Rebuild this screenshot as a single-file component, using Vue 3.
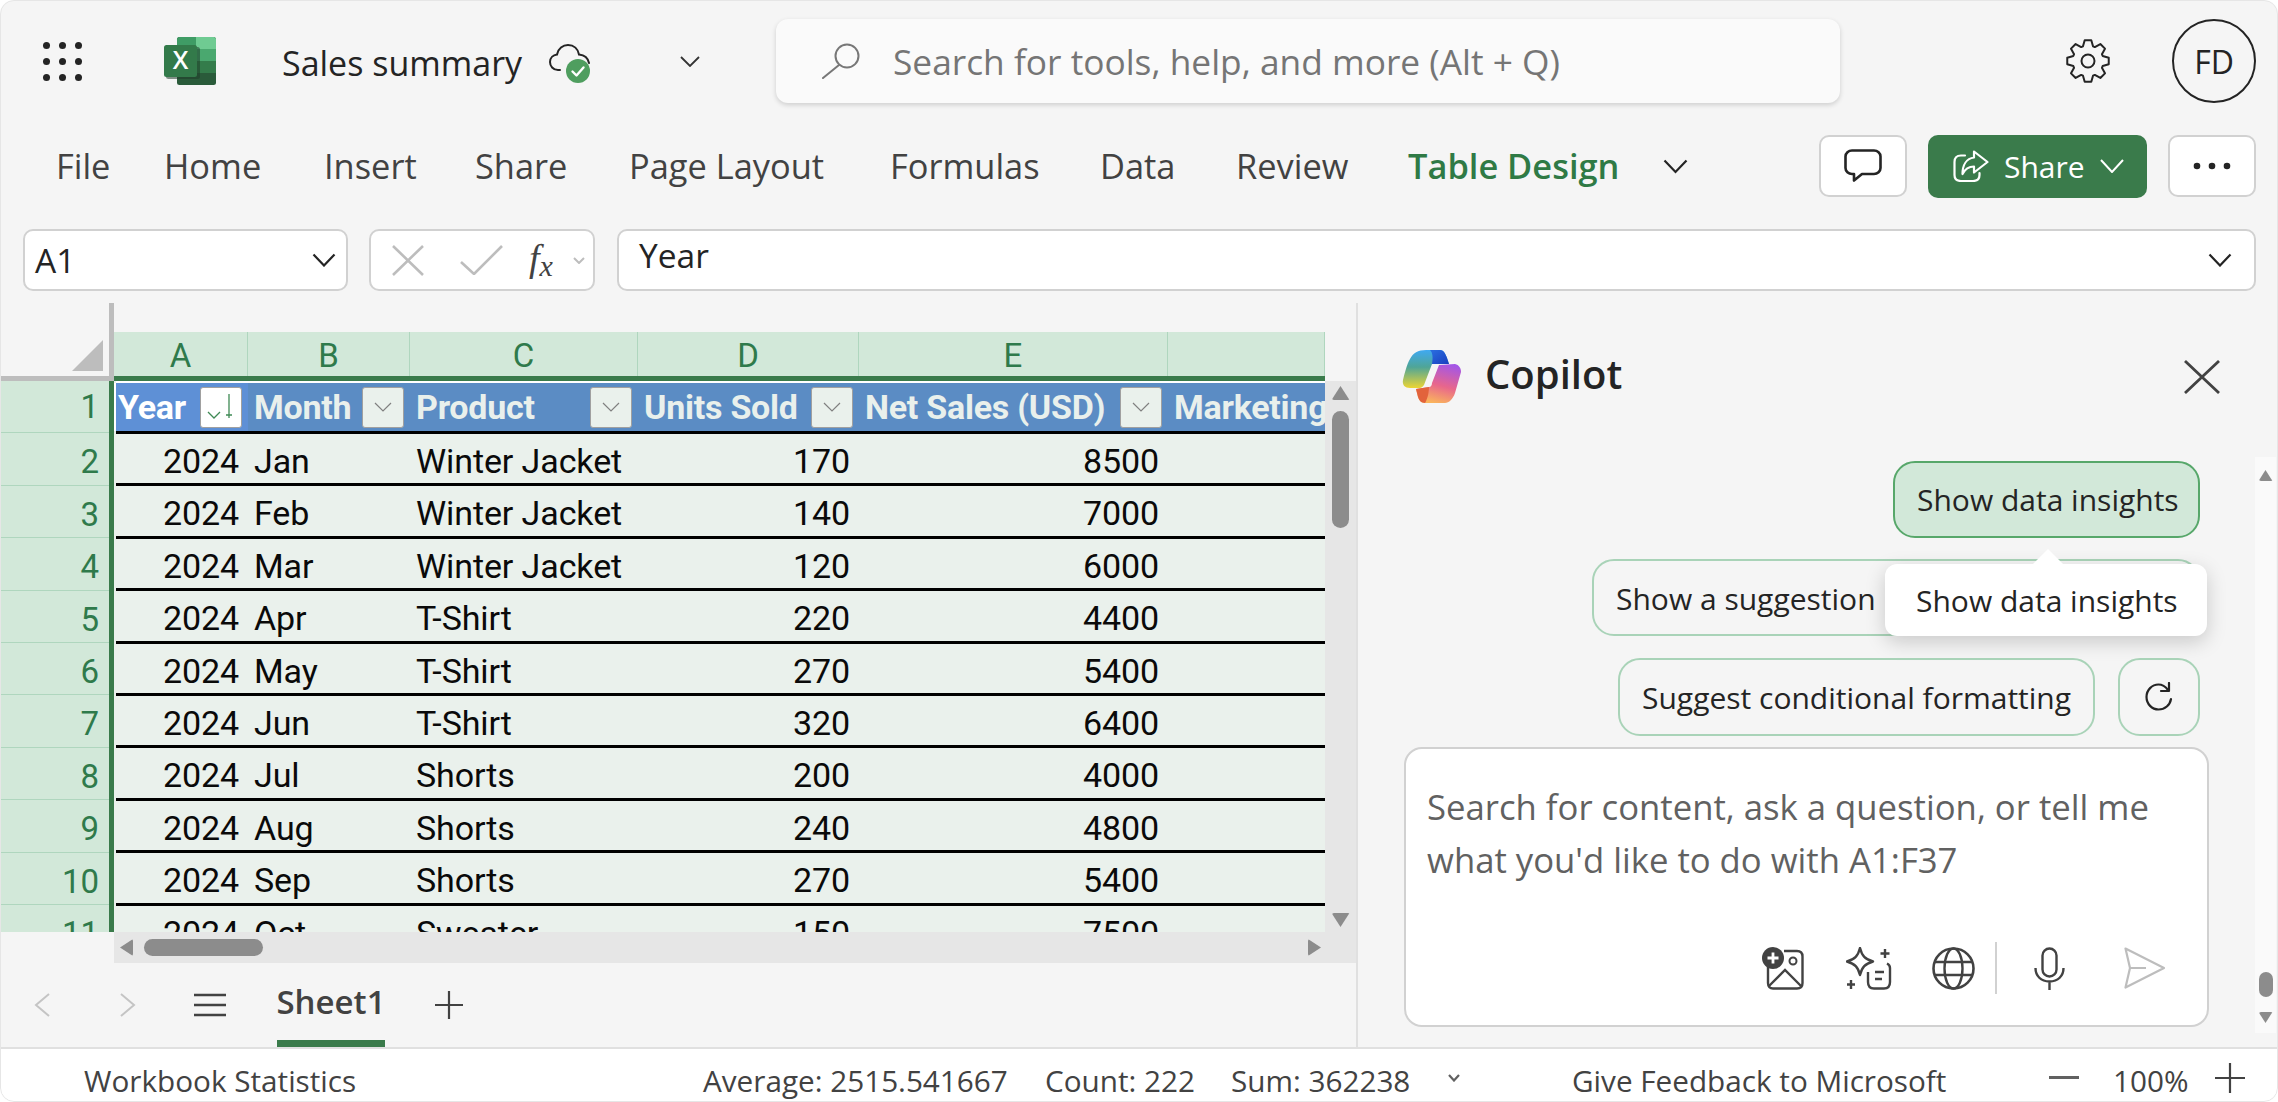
<template>
  <div class="window">
    <header class="titlebar">
      <div class="waffle"><i v-for="n in 9" :key="n"></i></div>
      <svg class="xl-logo" viewBox="0 0 52 48">
        <rect x="13" width="39" height="48" rx="2.5" fill="#2a5b3a" />
        <path d="M15.500 0H32V12H13V2.500A2.500 2.500 0 0 1 15.500 0Z" fill="#3f9c65" />
        <path d="M32 0H49.500A2.500 2.500 0 0 1 52 2.500V12H32Z" fill="#6fcb92" />
        <rect x="13" y="12" width="19" height="12" fill="#3a8a57" />
        <rect x="32" y="12" width="20" height="12" fill="#4aa86f" />
        <rect x="13" y="24" width="39" height="12" fill="#347c4b" />
        <rect y="9" width="34" height="32" rx="2.500" fill="#1f3d29" opacity=".55" transform="translate(2 1)" />
        <rect y="8" width="33" height="32" rx="2.500" fill="#337a4a" />
        <text x="16.500" y="32" text-anchor="middle" class="xl-x">X</text>
      </svg>
      <span class="doc-title">Sales summary</span>
      <svg class="cloud" viewBox="0 0 41 39" fill="none">
        <path d="M11 26H9C4 26 1 22 1 18C1 14 4 11 8 10.500C9 4.500 14 1 19 1C25 1 29 5 30 10.500C35 11 39 14 40 19" stroke="#242424" stroke-width="2" stroke-linecap="round" />
        <circle cx="29" cy="27" r="12" fill="#4f9e5f" />
        <path d="M23.500 27.500L27.500 31.500L34.500 23.500" stroke="#fff" stroke-width="2.400" stroke-linecap="round" stroke-linejoin="round" />
      </svg>
      <svg class="title-chev" viewBox="0 0 20 11" fill="none">
        <path d="M1 1L10 10L19 1" stroke="#333" stroke-width="1.800" />
      </svg>
      <div class="searchbox">
        <svg class="search-icon" viewBox="0 0 38 36" fill="none">
          <circle cx="25" cy="13" r="11.500" stroke="#777" stroke-width="2" />
          <path d="M17 22L1 35" stroke="#777" stroke-width="2" stroke-linecap="round" />
        </svg>
        <span>Search for tools, help, and more (Alt + Q)</span>
      </div>
      <svg class="gear" viewBox="0 0 44 44" fill="none">
        <path :d="gearPath" stroke="#242424" stroke-width="2" stroke-linejoin="round" />
        <circle cx="22" cy="22" r="6.500" stroke="#242424" stroke-width="2" />
      </svg>
      <div class="avatar">FD</div>
    </header>

    <nav class="ribbon">
      <span v-for="tab in tabs" :key="tab.label" class="tab" :class="{ active: tab.active }" :style="{ width: tab.width + 'px' }">{{ tab.label }}</span>
      <svg class="ribbon-chev" viewBox="0 0 25 15" fill="none">
        <path d="M1.500 1.500L12.500 13L23.500 1.500" stroke="#242424" stroke-width="2.200" />
      </svg>
      <div class="ribbon-actions">
        <button class="rb-btn">
          <svg width="38" height="33" viewBox="0 0 38 33" fill="none">
            <path d="M8 1.500H30C33.500 1.500 36.500 4 36.500 7.500V19C36.500 22.500 33.500 25 30 25H18L10 31.500V25H8C4.500 25 1.500 22.500 1.500 19V7.500C1.500 4 4.500 1.500 8 1.500Z" stroke="#242424" stroke-width="2.600" stroke-linejoin="round" />
          </svg>
        </button>
        <button class="share-btn">
          <svg width="36" height="32" viewBox="0 0 36 32" fill="none">
            <path d="M12 5.500H8C4 5.500 1.500 8 1.500 12V25C1.500 29 4 31 8 31H20C24 31 26.500 29 26.500 25V23" stroke="#fff" stroke-width="2.200" stroke-linecap="round" />
            <path d="M21 1.500L34.500 12L21 22.500V16.500C15.500 16.500 12 19 9.500 24C9.500 15 13.500 8.500 21 7.500Z" stroke="#fff" stroke-width="2.200" stroke-linejoin="round" />
          </svg>
          <span>Share</span>
          <svg width="24" height="14" viewBox="0 0 24 14" fill="none">
            <path d="M1 1L12 13L23 1" stroke="#fff" stroke-width="2" />
          </svg>
        </button>
        <button class="rb-btn">
          <svg width="38" height="8" viewBox="0 0 38 8"><circle cx="4" cy="4" r="3.300" fill="#242424" /><circle cx="19" cy="4" r="3.300" fill="#242424" /><circle cx="34" cy="4" r="3.300" fill="#242424" /></svg>
        </button>
      </div>
    </nav>

    <section class="formula-row">
      <div class="field name-box">
        <span>A1</span>
        <svg width="24" height="14" viewBox="0 0 24 14" fill="none"><path d="M1.500 1.500L12 12.500L22.500 1.500" stroke="#242424" stroke-width="2.200" /></svg>
      </div>
      <div class="field fx-box">
        <svg width="32" height="31" viewBox="0 0 32 31" fill="none"><path d="M1 1L31 30M31 1L1 30" stroke="#bdbdbd" stroke-width="2.600" /></svg>
        <svg class="fx-check" width="43" height="30" viewBox="0 0 43 30" fill="none"><path d="M1 17L14 29L42 1" stroke="#bdbdbd" stroke-width="2.600" /></svg>
        <span class="fx-label">f<sub>x</sub></span>
        <svg width="12" height="7" viewBox="0 0 12 7" fill="none"><path d="M1 1L6 6L11 1" stroke="#bdbdbd" stroke-width="2" /></svg>
      </div>
      <div class="field formula-input">
        <span>Year</span>
        <svg width="24" height="14" viewBox="0 0 24 14" fill="none"><path d="M1.500 1.500L12 12.500L22.500 1.500" stroke="#242424" stroke-width="2.200" /></svg>
      </div>
    </section>

    <main class="workspace">
      <div class="sheet">
        <div class="sheet-top">
          <div class="corner"><i></i></div>
          <div class="col-strip">
            <div class="col-heads">
              <span v-for="c in columns" :key="c.name" class="col-head" :style="{ width: c.width + 'px' }">{{ c.letter }}</span>
            </div>
          </div>
        </div>
        <div class="sheet-body">
          <div class="row-heads">
            <div v-for="n in 11" :key="n" class="row-head">{{ n }}</div>
          </div>
          <div class="cells">
            <div class="tbl-row tbl-header">
              <div v-for="(c, i) in columns" :key="c.name" class="th" :class="{ 'th-sorted': i === 0 }" :style="{ width: c.width + 'px' }">
                <span class="th-label">{{ c.name }}</span>
                <button v-if="c.filter" class="filter" :class="{ sorted: i === 0 }">
                  <svg v-if="i === 0" width="30" height="28" viewBox="0 0 30 28" fill="none">
                    <path d="M2 19L8 25L14 19" stroke="#3f8a55" stroke-width="1.300" />
                    <path d="M23 1V25M20 22H26" stroke="#3f8a55" stroke-width="1.300" />
                  </svg>
                  <svg v-else width="18" height="10" viewBox="0 0 18 10" fill="none">
                    <path d="M1 1L9 9L17 1" stroke="#808080" stroke-width="1.200" />
                  </svg>
                </button>
              </div>
            </div>
            <div v-for="row in rows" :key="row.month" class="tbl-row">
              <div class="td num" style="width: 132px">2024</div>
              <div class="td" style="width: 162px">{{ row.month }}</div>
              <div class="td" style="width: 228px">{{ row.product }}</div>
              <div class="td num" style="width: 221px">{{ row.units }}</div>
              <div class="td num" style="width: 309px">{{ row.sales }}</div>
              <div class="td" style="width: 157px"></div>
            </div>
          </div>
          <div class="vscroll">
            <span class="arrow arrow-up"></span>
            <span class="v-thumb"></span>
            <span class="arrow arrow-down"></span>
          </div>
        </div>
        <div class="hscroll-row">
          <div class="hscroll">
            <span class="harrow harrow-left"></span>
            <span class="h-thumb"></span>
            <span class="harrow harrow-right"></span>
          </div>
        </div>
        <div class="sheet-tabs">
          <svg class="nav-prev" width="16" height="24" viewBox="0 0 16 24" fill="none"><path d="M15 1L2 12L15 23" stroke="#c4c4c4" stroke-width="2" /></svg>
          <svg class="nav-next" width="16" height="24" viewBox="0 0 16 24" fill="none"><path d="M1 1L14 12L1 23" stroke="#c4c4c4" stroke-width="2" /></svg>
          <svg class="nav-menu" width="32" height="24" viewBox="0 0 32 24" fill="none"><path d="M0 2H32M0 12H32M0 22H32" stroke="#424242" stroke-width="2.400" /></svg>
          <div class="sheet-name">Sheet1</div>
          <svg class="nav-add" width="28" height="28" viewBox="0 0 28 28" fill="none"><path d="M14 0V28M0 14H28" stroke="#424242" stroke-width="2.200" /></svg>
        </div>
      </div>

      <aside class="copilot">
        <div class="copilot-head">
          <svg class="copilot-logo" viewBox="0 0 59 53">
            <defs>
              <linearGradient id="leftBand" x1="0" y1="0" x2="0" y2="1">
                <stop offset="0" stop-color="#3fa9f2" />
                <stop offset=".45" stop-color="#4fa597" />
                <stop offset="1" stop-color="#ecd534" />
              </linearGradient>
              <linearGradient id="tailBand" x1="0" y1="0" x2="1" y2="1">
                <stop offset="0" stop-color="#2b6fe0" />
                <stop offset="1" stop-color="#1a3fbf" />
              </linearGradient>
              <linearGradient id="rightBand" x1="0.700" y1="0" x2="0.400" y2="1">
                <stop offset="0" stop-color="#a456e6" />
                <stop offset=".55" stop-color="#e8668c" />
                <stop offset="1" stop-color="#fab45c" />
              </linearGradient>
            </defs>
            <path d="M24 0H38C42 0 44 4 47 14H30L22 35C20 38 18 38 16 38H8C3 38 0 35 1 30C3 22 5 14 8 9C11 3 16 0 24 0Z" fill="url(#leftBand)" />
            <path d="M28 0H38C42 0 44 4 47 14H30C31 8 31 3 28 0Z" fill="url(#tailBand)" />
            <path d="M37 15L53 14C57 15 59 18 59 22L53 43C51 49 47 53 43 53H23C19 53 17 50 16 47L14 39L27 37C29 37 30 35 30 33Z" fill="url(#rightBand)" />
            <path d="M14 39L27 37C27 43 25 50 23 53C19 53 17 50 16 47Z" fill="#e2633c" />
          </svg>
          <span class="copilot-title">Copilot</span>
          <svg class="copilot-close" width="36" height="34" viewBox="0 0 36 34" fill="none"><path d="M1 1L35 33M35 1L1 33" stroke="#424242" stroke-width="2.800" /></svg>
        </div>
        <div class="copilot-body">
          <div class="copilot-main">
            <div class="chips">
              <div class="chip chip-active">Show data insights</div>
              <div class="chip chip-long">
                Show a suggestion
                <div class="tooltip">Show data insights</div>
              </div>
              <div class="chip-row">
                <div class="chip">Suggest conditional formatting</div>
                <div class="chip chip-icon">
                  <svg width="30" height="30" viewBox="0 0 30 30" fill="none">
                    <path d="M24 8C21 4 18 2.500 14.500 2.500C8 2.500 2.500 8 2.500 15C2.500 22 8 27.500 14.500 27.500C21 27.500 26 23 27 17" stroke="#242424" stroke-width="2.200" stroke-linecap="round" />
                    <path d="M25 1V9H17" stroke="#242424" stroke-width="2.200" stroke-linecap="round" stroke-linejoin="round" />
                  </svg>
                </div>
              </div>
            </div>
            <div class="prompt">
              <p>Search for content, ask a question, or tell me what you'd like to do with A1:F37</p>
              <div class="prompt-tools">
                <svg class="tool-image" width="42" height="43" viewBox="0 0 42 43" fill="none">
                  <path d="M22 4H35C38.500 4 40.500 6 40.500 9.500V36C40.500 39.500 38.500 41.500 35 41.500H11C8 41.500 6 39.500 6 36V20" stroke="#424242" stroke-width="2.400" />
                  <path d="M7 39L23 23L39 39" stroke="#424242" stroke-width="2.400" />
                  <circle cx="31" cy="14" r="3.500" stroke="#424242" stroke-width="2" />
                  <circle cx="11" cy="11" r="11" fill="#424242" />
                  <path d="M11 5.500V16.500M5.500 11H16.500" stroke="#fff" stroke-width="2.800" />
                </svg>
                <svg class="tool-spark" width="46" height="43" viewBox="0 0 46 43" fill="none">
                  <path d="M14 1C16 9 19 12 27 14.500C19 17 16 20 14 28C12 20 9 17 1 14.500C9 12 12 9 14 1Z" stroke="#424242" stroke-width="2.400" stroke-linejoin="round" />
                  <path d="M22 25V35C22 39 24 41.500 28 41.500H38C42 41.500 44 39 44 35V21C44 19 43 17.500 41 16.500" stroke="#424242" stroke-width="2.400" />
                  <path d="M29 25H38M29 32H36" stroke="#424242" stroke-width="2.600" />
                  <path d="M39 2V11M34.500 6.500H43.500M5 33V42M1 37.500H9" stroke="#424242" stroke-width="2.400" />
                </svg>
                <svg class="tool-globe" width="43" height="43" viewBox="0 0 43 43" fill="none">
                  <circle cx="21.500" cy="21.500" r="20" stroke="#424242" stroke-width="2.600" />
                  <ellipse cx="21.500" cy="21.500" rx="9" ry="20" stroke="#424242" stroke-width="2.400" />
                  <path d="M3 15H40M3 28H40" stroke="#424242" stroke-width="2.400" />
                </svg>
                <i class="tool-sep"></i>
                <svg class="tool-mic" width="31" height="43" viewBox="0 0 31 43" fill="none">
                  <rect x="8.500" y="1.500" width="14" height="28" rx="7" stroke="#424242" stroke-width="2.400" />
                  <path d="M1.500 21C1.500 29 7 34.500 15.500 34.500C24 34.500 29.500 29 29.500 21M15.500 34.500V43" stroke="#424242" stroke-width="2.400" />
                </svg>
                <svg class="tool-send" width="41" height="42" viewBox="0 0 41 42" fill="none">
                  <path d="M1.500 1.500L40 21L1.500 40.500L6 21ZM6 21H22" stroke="#bdbdbd" stroke-width="2.200" stroke-linejoin="round" />
                </svg>
              </div>
            </div>
          </div>
          <div class="pane-scroll">
            <span class="pane-arrow pane-up"></span>
            <span class="pane-thumb"></span>
            <span class="pane-arrow pane-down"></span>
          </div>
        </div>
      </aside>
    </main>

    <footer class="statusbar">
      <span v-for="item in statusItems" :key="item.label" :style="{ width: item.width + 'px' }">{{ item.label }}</span>
      <svg class="st-chev" width="12" height="8" viewBox="0 0 12 8" fill="none"><path d="M1 1L6 6.500L11 1" stroke="#616161" stroke-width="2.200" /></svg>
      <span class="st-feedback">Give Feedback to Microsoft</span>
      <svg class="st-minus" width="30" height="4" viewBox="0 0 30 4"><rect width="30" height="3" fill="#616161" /></svg>
      <span class="st-zoom">100%</span>
      <svg width="30" height="30" viewBox="0 0 30 30" fill="none"><path d="M15 0V30M0 15H30" stroke="#424242" stroke-width="2.200" /></svg>
    </footer>
  </div>
</template>

<script setup>
const tabs = [
  { label: 'File', width: 108 },
  { label: 'Home', width: 160 },
  { label: 'Insert', width: 151 },
  { label: 'Share', width: 154 },
  { label: 'Page Layout', width: 261 },
  { label: 'Formulas', width: 210 },
  { label: 'Data', width: 136 },
  { label: 'Review', width: 172 },
  { label: 'Table Design', width: 254, active: true }
]

const columns = [
  { letter: 'A', name: 'Year', width: 134, filter: true },
  { letter: 'B', name: 'Month', width: 162, filter: true },
  { letter: 'C', name: 'Product', width: 228, filter: true },
  { letter: 'D', name: 'Units Sold', width: 221, filter: true },
  { letter: 'E', name: 'Net Sales (USD)', width: 309, filter: true },
  { letter: '', name: 'Marketing Spend', width: 157, filter: false }
]

const rows = [
  { month: 'Jan', product: 'Winter Jacket', units: 170, sales: 8500 },
  { month: 'Feb', product: 'Winter Jacket', units: 140, sales: 7000 },
  { month: 'Mar', product: 'Winter Jacket', units: 120, sales: 6000 },
  { month: 'Apr', product: 'T-Shirt', units: 220, sales: 4400 },
  { month: 'May', product: 'T-Shirt', units: 270, sales: 5400 },
  { month: 'Jun', product: 'T-Shirt', units: 320, sales: 6400 },
  { month: 'Jul', product: 'Shorts', units: 200, sales: 4000 },
  { month: 'Aug', product: 'Shorts', units: 240, sales: 4800 },
  { month: 'Sep', product: 'Shorts', units: 270, sales: 5400 },
  { month: 'Oct', product: 'Sweater', units: 150, sales: 7500 }
]

const statusItems = [
  { label: 'Workbook Statistics', width: 619 },
  { label: 'Average: 2515.541667', width: 342 },
  { label: 'Count: 222', width: 186 },
  { label: 'Sum: 362238', width: 217 }
]

// gear outline: 8 teeth around the centre of a 44 box
const gearPath = (() => {
  const pts = []
  for (let i = 0; i < 8; i++) {
    const a = (i * Math.PI) / 4 - Math.PI / 2
    const step = Math.PI / 4
    const at = (r, da) => `${(22 + r * Math.cos(a + da)).toFixed(2)} ${(22 + r * Math.sin(a + da)).toFixed(2)}`
    pts.push(at(15.5, -step * 0.42), at(21, -step * 0.2), at(21, step * 0.2), at(15.5, step * 0.42))
  }
  return 'M' + pts.join('L') + 'Z'
})()
</script>

<style scoped>
.window {
  position: relative;
  width: 2278px;
  height: 1102px;
  display: flex;
  flex-direction: column;
  background: #f5f5f5;
  border-radius: 14px;
  overflow: hidden;
  font-family: "Open Sans", "Noto Sans", sans-serif;
  color: #242424;
}

.window::after {
  content: "";
  position: absolute;
  inset: 0;
  border: 1.5px solid #e6e6e6;
  border-radius: 14px;
  pointer-events: none;
}

.titlebar {
  height: 122px;
  display: flex;
  align-items: center;
  padding-left: 43px;
  flex: none;
}

.waffle {
  width: 39px;
  display: grid;
  grid-template-columns: repeat(3, 7px);
  grid-auto-rows: 7px;
  justify-content: space-between;
  row-gap: 9px;
}

.waffle i {
  background: #242424;
  border-radius: 50%;
}

.xl-logo {
  width: 52px;
  height: 48px;
  margin-left: 82px;
}

.xl-x {
  font: 600 25px "Open Sans", sans-serif;
  fill: #fff;
}

.doc-title {
  width: 240px;
  margin-left: 66px;
  font-size: 34px;
  white-space: nowrap;
  padding-top: 4px;
}

.cloud {
  width: 41px;
  height: 39px;
  margin-left: 27px;
  margin-top: 4px;
}

.title-chev {
  width: 20px;
  height: 11px;
  margin-left: 90px;
}

.searchbox {
  width: 1064px;
  height: 84px;
  margin-left: 76px;
  box-sizing: border-box;
  display: flex;
  align-items: center;
  padding-left: 46px;
  background: #fafafa;
  border-radius: 12px;
  box-shadow: 0 2px 5px rgba(0, 0, 0, 0.16);
  color: #757575;
  font-size: 35.300px;
}

.search-icon {
  width: 38px;
  height: 36px;
  margin-right: 33px;
}

.gear {
  width: 44px;
  height: 44px;
  margin-left: 226px;
}

.avatar {
  width: 84px;
  height: 84px;
  margin-left: 62px;
  box-sizing: border-box;
  border: 2px solid #242424;
  border-radius: 50%;
  display: flex;
  align-items: center;
  justify-content: center;
  font-size: 32px;
}

.ribbon {
  height: 88px;
  flex: none;
  display: flex;
  align-items: center;
  padding: 0 22px 0 56px;
}

.tab {
  flex: none;
  font-size: 34.400px;
  color: #424242;
  white-space: nowrap;
  padding-bottom: 2px;
}

.tab.active {
  color: #2f7a45;
  font-weight: 600;
}

.ribbon-chev {
  width: 25px;
  height: 15px;
  margin-left: 1px;
}

.ribbon-actions {
  margin-left: auto;
  display: flex;
  gap: 21px;
}

.rb-btn {
  width: 88px;
  height: 62px;
  background: #fff;
  border: 2px solid #d1d1d1;
  border-radius: 10px;
  display: flex;
  align-items: center;
  justify-content: center;
  padding: 0;
}

.share-btn {
  width: 219px;
  height: 63px;
  background: #3a7b4b;
  border: none;
  border-radius: 10px;
  color: #fff;
  display: flex;
  align-items: center;
  gap: 15px;
  padding: 0 0 0 25px;
  font: 30px "Open Sans", sans-serif;
}

.formula-row {
  height: 62px;
  margin-top: 19px;
  flex: none;
  display: flex;
  padding: 0 22px 0 23px;
  gap: 21px;
}

.field {
  box-sizing: border-box;
  height: 62px;
  background: #fff;
  border: 2px solid #d1d1d1;
  border-radius: 10px;
  display: flex;
  align-items: center;
}

.name-box {
  width: 325px;
  justify-content: space-between;
  padding: 0 10px 0 10px;
  font-size: 33.500px;
}

.fx-box {
  width: 226px;
  padding-left: 21px;
}

.fx-check {
  margin-left: 36px;
}

.fx-label {
  width: 44px;
  margin-left: 26px;
  padding-bottom: 5px;
  font: italic 38px "Liberation Serif", serif;
  color: #424242;
}

.fx-label sub {
  font-size: 30px;
  vertical-align: -5px;
  line-height: 0;
}

.formula-input {
  flex: 1;
  margin-left: 1px;
  justify-content: space-between;
  padding: 0 22px 0 20px;
  font-size: 33.500px;
}

.formula-input span {
  padding-bottom: 10px;
}

.workspace {
  flex: 1;
  margin-top: 12px;
  display: flex;
  min-height: 0;
}

.sheet {
  width: 1356px;
  flex: none;
  display: flex;
  flex-direction: column;
  border-right: 2px solid #e0e0e0;
  box-sizing: content-box;
}

.sheet-top {
  height: 78px;
  display: flex;
  flex: none;
}

.corner {
  width: 114px;
  flex: none;
  box-sizing: border-box;
  border-right: 5px solid #bdbdbd;
  border-bottom: 5px solid #bdbdbd;
  display: flex;
  justify-content: flex-end;
  align-items: flex-end;
  padding: 0 6px 5px 0;
}

.corner i {
  width: 31px;
  height: 31px;
  background: #bdbdbd;
  clip-path: polygon(100% 0, 100% 100%, 0 100%);
}

.col-strip {
  width: 1211px;
  padding-top: 29px;
  box-sizing: border-box;
}

.col-heads {
  height: 49px;
  box-sizing: border-box;
  display: flex;
  background: #d2e8d9;
  border-bottom: 5px solid #3a7b4b;
  overflow: hidden;
}

.col-head {
  flex: none;
  box-sizing: border-box;
  border-right: 1.500px solid #afd6be;
  text-align: center;
  font: 33px/48px Roboto, sans-serif;
  color: #2f7a4b;
}

.sheet-body {
  height: 551px;
  flex: none;
  display: flex;
  overflow: hidden;
}

.row-heads {
  width: 114px;
  flex: none;
  box-sizing: border-box;
  background: #d2e8d9;
  border-right: 5px solid #3a7b4b;
}

.row-head {
  height: 52.400px;
  box-sizing: border-box;
  border-bottom: 1.500px solid #afd6be;
  padding-right: 10px;
  text-align: right;
  font: 33px/57px Roboto, sans-serif;
  color: #2f7a4b;
}

.row-head:first-child {
  line-height: 52px;
}

.cells {
  width: 1211px;
  flex: none;
  background: #eaf1ec;
  overflow: hidden;
  box-sizing: border-box;
  padding-left: 2px;
}

.tbl-row {
  display: flex;
  height: 52.400px;
  box-sizing: border-box;
  border-bottom: 3px solid #000;
  font: 34px Roboto, sans-serif;
  color: #0a0a0a;
}

.tbl-header {
  height: 53px;
  border-top: 2px solid #fff;
}

.th {
  flex: none;
  box-sizing: border-box;
  display: flex;
  align-items: center;
  justify-content: space-between;
  padding: 0 6px 0 6px;
  background: #5b8cc4;
  overflow: hidden;
}

.th-sorted {
  margin-left: -2px;
  border-left: 2px solid #fff;
  background: #5e90d6;
  padding-left: 2px;
}

.th-label {
  font-weight: 700;
  color: #e9f0ec;
  white-space: nowrap;
  letter-spacing: -0.25px;
}

.th-sorted .th-label {
  color: #fff;
}

.filter {
  flex: none;
  width: 42px;
  height: 41px;
  padding: 0;
  box-sizing: border-box;
  background: #eaf1ec;
  border: 1px solid #a0a0a0;
  border-radius: 3px;
  display: flex;
  align-items: center;
  justify-content: center;
}

.filter.sorted {
  background: #fff;
}

.td {
  flex: none;
  box-sizing: border-box;
  padding: 0 6px;
  line-height: 54px;
  white-space: nowrap;
  letter-spacing: -0.1px;
}

.td.num {
  text-align: right;
  padding-right: 9px;
}

.vscroll {
  width: 31px;
  flex: none;
  background: #e6e6e6;
  display: flex;
  flex-direction: column;
  align-items: center;
  padding-top: 5px;
  box-sizing: border-box;
}

.arrow,
.harrow,
.pane-arrow {
  display: block;
  background: #8c8c8c;
  border-radius: 2px;
}

.arrow {
  width: 18px;
  height: 14px;
}

.arrow-up,
.pane-up {
  clip-path: polygon(50% 0, 100% 100%, 0 100%);
}

.arrow-down,
.pane-down {
  clip-path: polygon(0 0, 100% 0, 50% 100%);
}

.v-thumb {
  width: 17px;
  height: 117px;
  margin-top: 11px;
  background: #8c8c8c;
  border-radius: 9px;
}

.arrow-down {
  margin-top: auto;
  margin-bottom: 5px;
}

.hscroll-row {
  height: 31px;
  flex: none;
  padding-left: 114px;
  box-sizing: border-box;
}

.hscroll {
  height: 31px;
  background: #e6e6e6;
  display: flex;
  align-items: center;
  padding: 0 35px 0 6px;
}

.harrow {
  width: 13px;
  height: 17px;
}

.harrow-left {
  clip-path: polygon(100% 0, 100% 100%, 0 50%);
}

.harrow-right {
  clip-path: polygon(0 0, 100% 50%, 0 100%);
  margin-left: auto;
}

.h-thumb {
  width: 119px;
  height: 17px;
  margin-left: 11px;
  background: #8c8c8c;
  border-radius: 9px;
}

.sheet-tabs {
  flex: 1;
  display: flex;
  align-items: center;
  padding-left: 34px;
}

.sheet-tabs svg {
  margin-bottom: 1px;
}

.nav-next {
  margin-left: 70px;
}

.nav-menu {
  margin-left: 58px;
}

.sheet-name {
  align-self: stretch;
  display: flex;
  align-items: center;
  margin-left: 51px;
  width: 108px;
  box-sizing: border-box;
  border-bottom: 7px solid #3a7b4b;
  font-size: 33px;
  font-weight: 600;
  color: #424242;
  justify-content: center;
}

.nav-add {
  margin-left: 50px;
}

.copilot {
  flex: 1;
  min-width: 0;
  display: flex;
  flex-direction: column;
}

.copilot-head {
  height: 154px;
  flex: none;
  box-sizing: border-box;
  display: flex;
  align-items: flex-start;
  padding: 47px 0 0 44px;
}

.copilot-logo {
  width: 59px;
  height: 53px;
}

.copilot-title {
  margin-left: 24px;
  font-size: 40px;
  font-weight: 600;
  line-height: 48px;
  color: #242424;
}

.copilot-close {
  margin-left: auto;
  margin-right: 58px;
  margin-top: 10px;
}

.copilot-body {
  height: 576px;
  flex: none;
  display: flex;
}

.copilot-main {
  width: 897px;
  flex: none;
  box-sizing: border-box;
  padding-top: 4px;
}

.chips {
  display: flex;
  flex-direction: column;
  align-items: flex-end;
  gap: 21px;
  padding-right: 55px;
}

.chip-row {
  display: flex;
  gap: 23px;
  margin-top: 1px;
}

.chip {
  height: 77px;
  box-sizing: border-box;
  display: flex;
  align-items: center;
  padding: 0 22px;
  border: 2px solid #a9d3b8;
  border-radius: 22px;
  font-size: 30px;
  white-space: nowrap;
  position: relative;
}

.chip-active {
  background: #d2e8d9;
  border-color: #57a76a;
  width: 307px;
}

.chip-long {
  width: 608px;
  padding-top: 2px;
}

.chip-row .chip {
  width: 477px;
  height: 78px;
  padding-top: 0;
}

.chip-row .chip-icon {
  width: 82px;
  padding: 0;
  justify-content: center;
}

.tooltip {
  position: absolute;
  left: 291px;
  top: 3px;
  width: 322px;
  height: 72px;
  box-sizing: border-box;
  display: flex;
  align-items: center;
  padding-left: 31px;
  background: #fff;
  border-radius: 12px;
  box-shadow: 0 6px 20px rgba(0, 0, 0, 0.18);
}

.tooltip::before {
  content: "";
  position: absolute;
  left: 147px;
  top: -15px;
  width: 32px;
  height: 16px;
  background: #fff;
  clip-path: polygon(50% 0, 100% 100%, 0 100%);
}

.prompt {
  width: 805px;
  height: 280px;
  margin: 11px 0 0 46px;
  box-sizing: border-box;
  background: #fff;
  border: 2px solid #d1d1d1;
  border-radius: 18px;
  padding: 31px 21px 0 21px;
  display: flex;
  flex-direction: column;
}

.prompt p {
  margin: 0;
  font-size: 34.700px;
  line-height: 53px;
  color: #616161;
}

.prompt-tools {
  margin-top: auto;
  margin-bottom: 31px;
  display: flex;
  align-items: center;
  padding-left: 335px;
}

.tool-spark {
  margin-left: 42px;
}

.tool-globe {
  margin-left: 40px;
}

.tool-sep {
  width: 1.500px;
  height: 52px;
  background: #d1d1d1;
  margin-left: 20px;
}

.tool-mic {
  margin-left: 37px;
}

.tool-send {
  margin-left: 59px;
}

.pane-scroll {
  width: 21px;
  flex: none;
  background: #fafafa;
  display: flex;
  flex-direction: column;
  align-items: center;
  padding-top: 13px;
  box-sizing: border-box;
}

.pane-arrow {
  width: 14px;
  height: 11px;
}

.pane-thumb {
  width: 14px;
  height: 25px;
  background: #8c8c8c;
  border-radius: 7px;
  margin-top: auto;
}

.pane-down {
  margin-top: 15px;
  margin-bottom: 10px;
}

.statusbar {
  height: 55px;
  flex: none;
  box-sizing: border-box;
  background: #fff;
  border-top: 2px solid #e0e0e0;
  display: flex;
  align-items: center;
  padding: 5px 0 0 84px;
  font-size: 29.700px;
  color: #424242;
  white-space: nowrap;
}

.statusbar span {
  flex: none;
  padding-top: 5px;
}

.st-chev {
  flex: none;
}

.st-feedback {
  margin-left: 112px;
  width: 477px;
}

.st-zoom {
  margin-left: 34px;
  width: 102px;
}
</style>

<style>
html,
body {
  margin: 0;
  background: #fff;
}
</style>
